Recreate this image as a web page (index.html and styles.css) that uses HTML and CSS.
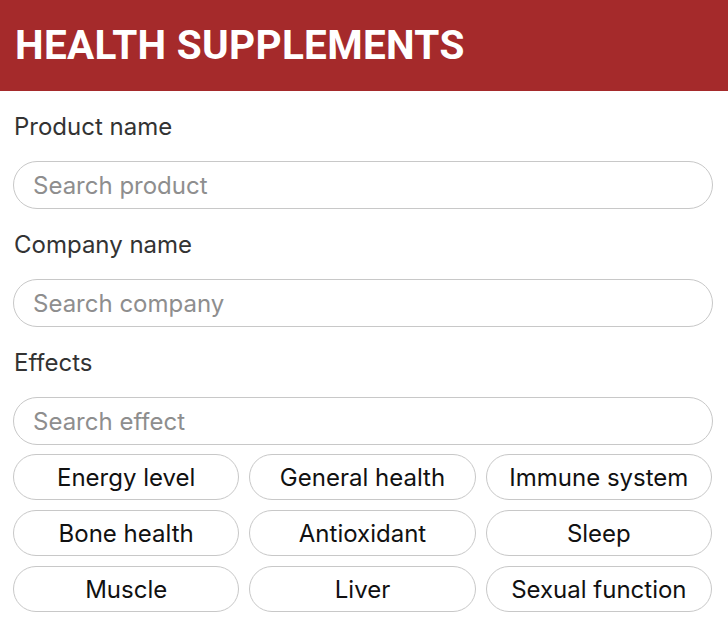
FILE: index.html
```html
<!DOCTYPE html>
<html lang="en">
<head>
<meta charset="utf-8">
<title>Health Supplements</title>
<link rel="stylesheet" href="styles.css">
</head>
<body>
<header class="topbar">
  <h1 class="title">HEALTH SUPPLEMENTS</h1>
</header>
<main class="content">
  <label class="field-label" for="product">Product name</label>
  <input class="search" id="product" type="text" placeholder="Search product">
  <label class="field-label" for="company">Company name</label>
  <input class="search" id="company" type="text" placeholder="Search company">
  <label class="field-label" for="effect">Effects</label>
  <input class="search" id="effect" type="text" placeholder="Search effect">
  <div class="chips">
    <button class="chip">Energy level</button>
    <button class="chip">General health</button>
    <button class="chip">Immune system</button>
    <button class="chip">Bone health</button>
    <button class="chip">Antioxidant</button>
    <button class="chip">Sleep</button>
    <button class="chip">Muscle</button>
    <button class="chip">Liver</button>
    <button class="chip">Sexual function</button>
  </div>
</main>
</body>
</html>
```
FILE: styles.css
```css
* { box-sizing: border-box; }
html, body { margin: 0; padding: 0; background: #fff; }
body { font-family: Inter, "Liberation Sans", sans-serif; }

.topbar {
  background: #a52a2b;
  height: 91px;
  display: flex;
  align-items: center;
  padding: 0 15px 2px;
}
.title {
  margin: 0;
  color: #fff;
  font-family: Roboto, "Liberation Sans", sans-serif;
  font-weight: 700;
  font-size: 40.5px;
  letter-spacing: 0.3px;
}

.content {
  display: flex;
  flex-direction: column;
  padding: 0 15px 0 13px;
}
.field-label {
  margin: 22px 0 20px 1px;
  line-height: 28px;
  font-size: 24px;
  color: #333;
}
.search {
  height: 48px;
  width: 100%;
  border: 1px solid #c8c8c8;
  border-radius: 24px;
  padding: 0 19px;
  font-family: inherit;
  font-size: 24px;
  color: #333;
  outline: none;
  background: #fff;
}
.search::placeholder { color: #8e8e8e; }

.chips {
  margin-top: 9px;
  display: grid;
  grid-template-columns: repeat(3, 1fr);
  gap: 10px;
  padding-right: 1px;
}
.chip {
  height: 46px;
  border: 1px solid #c8c8c8;
  border-radius: 23px;
  background: #fff;
  font-family: inherit;
  font-size: 24px;
  color: #111;
  padding: 0;
}
```
